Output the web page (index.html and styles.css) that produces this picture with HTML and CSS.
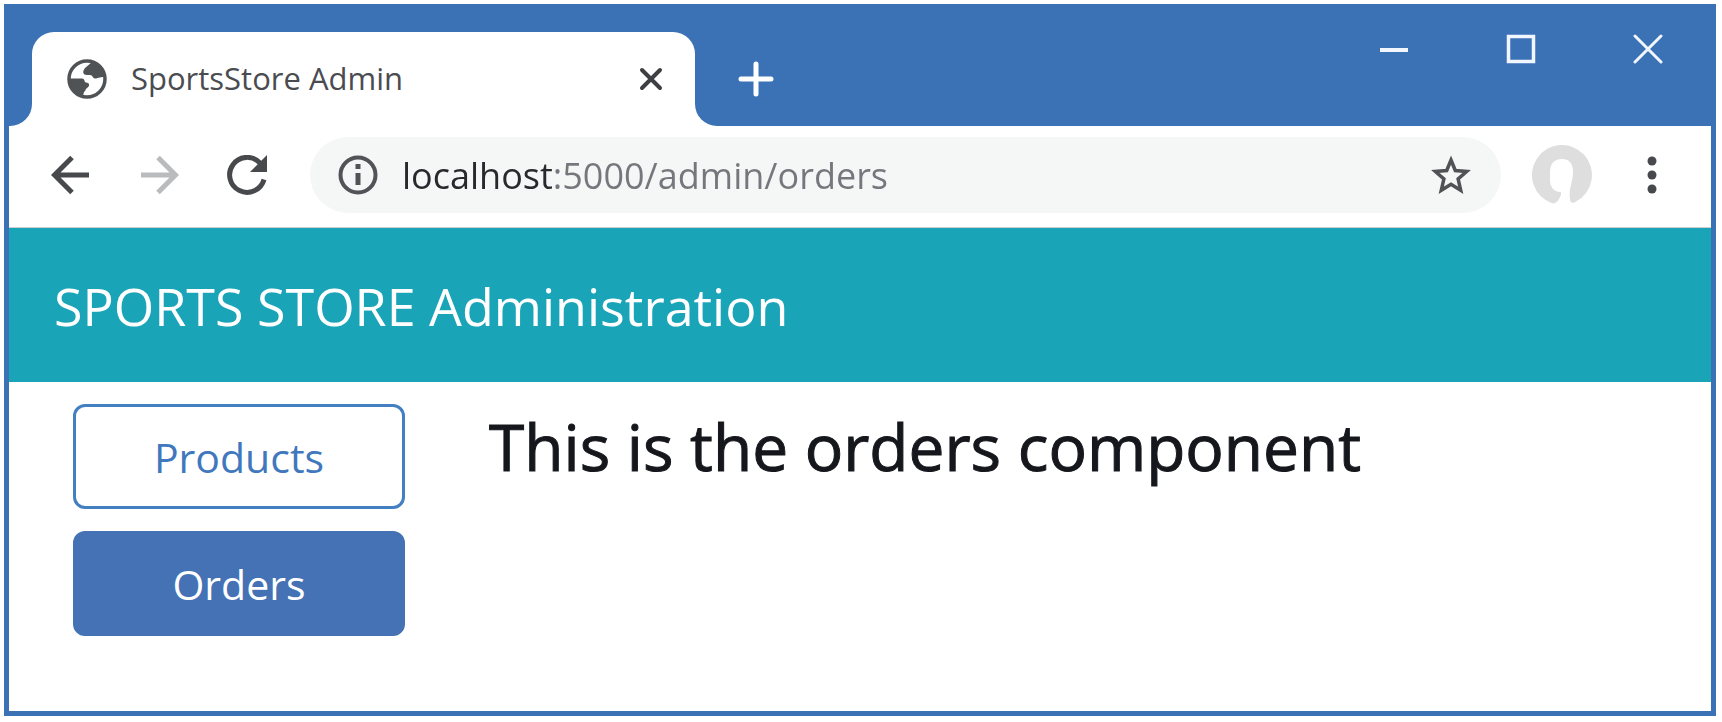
FILE: index.html
```html
<!DOCTYPE html>
<html lang="en">
<head>
<meta charset="utf-8">
<title>SportsStore Admin</title>
<link rel="stylesheet" href="styles.css">
</head>
<body>
<div class="window">
  <header class="titlebar">
    <div class="edge"></div>
    <div class="tab-slot">
      <div class="tab">
        <svg class="globe" viewBox="0 0 40 40" aria-hidden="true">
          <circle cx="20" cy="20" r="18" fill="#fff" stroke="#505356" stroke-width="3.500"/>
          <path d="M25 3L18 9C15 13 16 16 20 16h3c3 0 2 3 5 3.500 2 .5 3-1.500 10-1.500C38 9 32 3 25 3Z" fill="#505356"/>
          <path d="M3 19.500h12c3 0 2 3.500 4 4 4 0 4 4 1 5.500-2 1-1 3-3 4l-1 4C7 35 2 28 3 19.500Z" fill="#505356"/>
        </svg>
        <span class="tab-title">SportsStore Admin</span>
        <button class="icon-btn" aria-label="Close tab">
          <svg class="tab-close" viewBox="0 0 24 24"><path d="M3 3l18 18M21 3L3 21" stroke="#3d3f42" stroke-width="4" stroke-linecap="round"/></svg>
        </button>
      </div>
    </div>
    <div class="strip">
      <button class="icon-btn" aria-label="New tab">
        <svg class="plus" viewBox="0 0 36 36"><path d="M18 3v30M3 18h30" stroke="#fff" stroke-width="5" stroke-linecap="round"/></svg>
      </button>
      <div class="window-controls">
        <button class="icon-btn" aria-label="Minimize">
          <svg class="control" viewBox="0 0 30 30"><path d="M1 16h28" stroke="#f1f6ff" stroke-width="4"/></svg>
        </button>
        <button class="icon-btn" aria-label="Maximize">
          <svg class="control" viewBox="0 0 30 30"><rect x="2.500" y="2.500" width="25" height="25" fill="none" stroke="#f1f6ff" stroke-width="3.500"/></svg>
        </button>
        <button class="icon-btn" aria-label="Close window">
          <svg class="control" viewBox="0 0 30 30"><path d="M2 2l26 26M28 2L2 28" stroke="#f1f6ff" stroke-width="3" stroke-linecap="round"/></svg>
        </button>
      </div>
    </div>
  </header>

  <nav class="toolbar" aria-label="Browser">
    <div class="history">
      <button class="icon-btn" aria-label="Back">
        <svg class="nav-icon" viewBox="0 0 40 40"><path d="M38 20H4M21 2.500L3.500 20 21 37.500" fill="none" stroke="#47494c" stroke-width="5"/></svg>
      </button>
      <button class="icon-btn" aria-label="Forward">
        <svg class="nav-icon" viewBox="0 0 40 40"><path d="M2 20h34M19 2.500L36.500 20 19 37.500" fill="none" stroke="#b9bbbd" stroke-width="5"/></svg>
      </button>
      <button class="icon-btn" aria-label="Reload">
        <svg class="nav-icon" viewBox="0 0 40 40"><path d="M37 24.500A17.500 17.500 0 1 1 33 8" fill="none" stroke="#47494c" stroke-width="5"/><path d="M40 0v17H23Z" fill="#47494c"/></svg>
      </button>
    </div>
    <div class="omnibox">
      <svg class="nav-icon" viewBox="0 0 40 40" aria-hidden="true"><circle cx="20" cy="20" r="17.500" fill="none" stroke="#515356" stroke-width="4"/><path d="M20 18v12M20 9v5" stroke="#515356" stroke-width="5"/></svg>
      <input class="address" type="text" aria-label="Address" value="localhost:5000/admin/orders" spellcheck="false">
      <button class="icon-btn" aria-label="Bookmark this page">
        <svg class="nav-icon" viewBox="0 0 40 40"><path d="M20 5l4.300 10.500 11.400 1-8.600 7.500 2.600 11.200L20 29.200l-9.700 6L12.900 24l-8.600-7.500 11.400-1Z" fill="none" stroke="#505356" stroke-width="3.500"/></svg>
      </button>
    </div>
    <button class="icon-btn" aria-label="Profile">
      <svg class="avatar" viewBox="0 0 60 60"><path d="M20 58.300A30 30 0 1 1 44 56.500C41 59 38 58 38 54 37 48 38 44 39 40 40 35 41 31 41 27 41 18 37 14 30 14 22 14 18 19 18 27v8c0 7 4 12 10 12 2 0 1 4-1 7-2 3-4 5-7 4.300Z" fill="#dedede"/></svg>
    </button>
    <button class="icon-btn" aria-label="Menu">
      <svg class="dots" viewBox="0 0 10 40"><circle cx="5" cy="6" r="4.500" fill="#47494c"/><circle cx="5" cy="20" r="4.500" fill="#47494c"/><circle cx="5" cy="34" r="4.500" fill="#47494c"/></svg>
    </button>
  </nav>

  <div class="banner">SPORTS STORE Administration</div>

  <div class="content">
    <nav class="menu" aria-label="Administration">
      <button class="btn btn-outline">Products</button>
      <button class="btn btn-primary">Orders</button>
    </nav>
    <main class="main">
      <h1 class="heading">This is the orders component</h1>
    </main>
  </div>
</div>
</body>
</html>
```
FILE: styles.css
```css
* {
  box-sizing: border-box;
}

body {
  display: flex;
  min-height: 100vh;
  margin: 0;
  padding: 4px 6px 6px 4px;
  background: #fff;
  font-family: "Open Sans", "Noto Sans", sans-serif;
}

svg {
  display: block;
}

.window {
  display: flex;
  flex: 1;
  flex-direction: column;
  min-width: 0;
  border: 5px solid #3b72b6;
  background: #fff;
}

.icon-btn {
  flex: none;
  padding: 0;
  border: 0;
  background: none;
}

.titlebar {
  display: flex;
  border-top: 23px solid #3b72b6;
}

.edge {
  width: 23px;
  border-bottom-right-radius: 22px;
  background: #3b72b6;
}

.tab-slot {
  flex: 0 1 663px;
  min-width: 0;
  background: #3b72b6;
}

.tab {
  display: flex;
  align-items: center;
  gap: 24px;
  height: 94px;
  padding: 0 32px 0 35px;
  border-radius: 22px 22px 0 0;
  background: #fff;
}

.globe {
  flex: none;
  width: 40px;
  height: 40px;
}

.tab-title {
  flex: 1;
  overflow: hidden;
  padding-bottom: 2px;
  color: #4a4c50;
  font-size: 31px;
  white-space: nowrap;
}

.tab-close {
  width: 24px;
  height: 24px;
}

.strip {
  display: flex;
  flex: 1;
  align-items: center;
  justify-content: space-between;
  padding: 0 48px 0 43px;
  border-bottom-left-radius: 22px;
  background: #3b72b6;
}

.plus {
  width: 36px;
  height: 36px;
}

.window-controls {
  display: flex;
  gap: 97px;
  align-self: flex-start;
  padding-top: 2px;
}

.control {
  width: 30px;
  height: 30px;
}

.toolbar {
  display: flex;
  align-items: center;
  padding: 11px 54px 14px 42px;
  border-bottom: 1px solid #c9cfd0;
}

.history {
  display: flex;
  gap: 48px;
  margin-right: 43px;
}

.nav-icon {
  flex: none;
  width: 40px;
  height: 40px;
}

.omnibox {
  display: flex;
  flex: 1;
  align-items: center;
  gap: 24px;
  min-width: 0;
  height: 76px;
  margin-right: 31px;
  padding: 0 30px 0 28px;
  border-radius: 38px;
  background: #f5f6f6;
}

/* The host is darker than the rest of the address. */
.address {
  flex: 1;
  min-width: 0;
  padding: 0;
  border: 0;
  outline: 0;
  background: linear-gradient(90deg, #27292d 151px, #74777c 151px);
  -webkit-background-clip: text;
  background-clip: text;
  color: #74777c;
  font: 36px "Open Sans", "Noto Sans", sans-serif;
  -webkit-text-fill-color: transparent;
}

.avatar {
  width: 60px;
  height: 60px;
}

.dots {
  width: 10px;
  height: 40px;
  margin-left: 55px;
}

.banner {
  padding: 42px 45px 40px;
  background: #1aa4b8;
  color: #fff;
  font-size: 52px;
  line-height: 72px;
}

.content {
  display: flex;
  gap: 84px;
  padding: 22px 64px;
}

.menu {
  display: flex;
  flex: 0 0 332px;
  flex-direction: column;
  gap: 22px;
}

.btn {
  height: 105px;
  padding: 0;
  border: 3px solid #4380c2;
  border-radius: 12px;
  font: 41px "Open Sans", "Noto Sans", sans-serif;
}

.btn-outline {
  background: #fff;
  color: #3f78bd;
}

.btn-primary {
  border-color: #4472b4;
  background: #4472b4;
  color: #fff;
}

.main {
  flex: 1;
  min-width: 0;
}

.heading {
  margin: 0;
  color: #15171c;
  font-size: 64px;
  font-weight: 500;
  line-height: 86px;
  -webkit-text-stroke: 1px #15171c;
}
```
